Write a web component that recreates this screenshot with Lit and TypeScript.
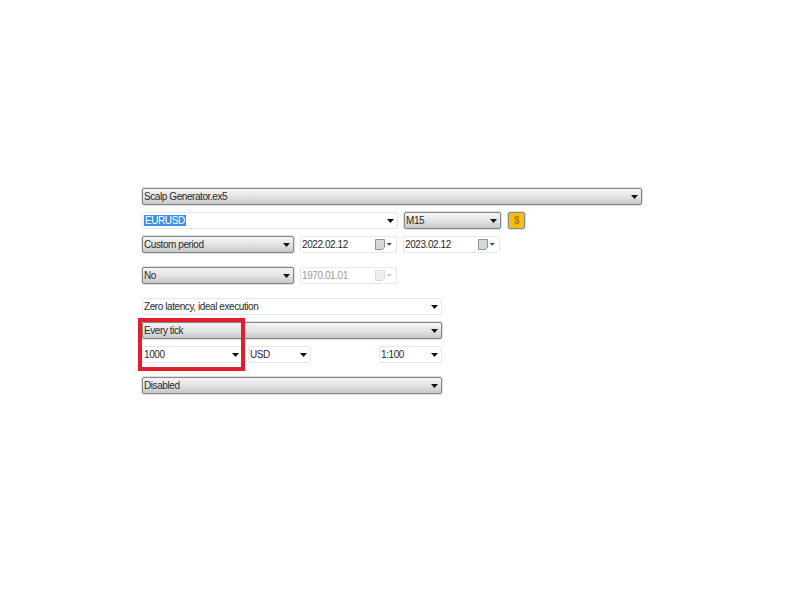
import { LitElement, html, css } from "lit";
import { customElement } from "lit/decorators.js";

const arrow = html`<svg class="arrow" width="7" height="4" viewBox="0 0 7 4"><path d="M0 0h7L3.5 4z" fill="#111"/></svg>`;
const cal = (dis: boolean) => html`<svg width="17" height="11" viewBox="0 0 17 11">
  <path d="M.5.5h9v7.5l-2 2.500H.5z" fill="${dis ? "#eef1f2" : "#d3d8db"}" stroke="${dis ? "#d9dbdd" : "#8f959a"}"/>
  <path d="M11.500 4h5.500l-2.750 2.750z" fill="${dis ? "#c8c8c8" : "#46525e"}"/></svg>`;

@customElement("app-root")
export class AppRoot extends LitElement {
  static styles = css`
    :host { display: block; width: 800px; height: 600px; background: #fff; position: relative; overflow: hidden;
      font-family: "Liberation Sans", Arial, sans-serif; font-size: 10px; letter-spacing: -0.42px; color: #2a2a2a; }
    .form { display: flex; flex-direction: column; padding: 188px 0 0 142px; width: 500px; }
    .row { display: flex; align-items: flex-start; }
    .sel { box-sizing: border-box; height: 17px; display: flex; align-items: center; justify-content: space-between;
      padding: 0 3px 0 1px; border-radius: 2px; flex: none; }
    .gray { border: 1px solid #858585; background: linear-gradient(#f4f4f4, #e6e6e6 45%, #c8c8c8); box-shadow: 0 0 0 1px #e0e0e0; }
    .white { border: 1px solid #e8e8e8; background: #fff; }
    .w500 { width: 500px; } .w300 { width: 300px; } .w256 { width: 256px; } .w152 { width: 152px; }
    .w97 { width: 97px; } .w101 { width: 101px; } .w63 { width: 63px; }
    .ml6 { margin-left: 6px; } .ml7 { margin-left: 7px; } .ml5 { margin-left: 5px; } .ml68 { margin-left: 68px; }
    .mt7 { margin-top: 7px; } .mt14 { margin-top: 14px; }
    .hl { background: #3f8fe3; color: #fff; padding: 0 1px; line-height: 11px; }
    .date { padding: 0 4px 0 1px; }
    .dis { color: #9a9a9a; }
    .coin { box-sizing: border-box; width: 17px; height: 17px; margin-left: 7px; border: 1px solid #8a8a8a; border-radius: 2px;
      background: #f6be12; display: flex; align-items: center; justify-content: center; color: #b27a00; font-weight: bold; font-size: 10px;
      box-shadow: 0 0 0 1px #dedede; }
    .redbox { position: absolute; left: 138px; top: 318px; width: 107px; height: 53px; box-sizing: border-box; border: 4px solid #e31e2c; }
  `;
  render() {
    return html`<div class="form">
      <div class="row"><div class="sel gray w500"><span>Scalp Generator.ex5</span>${arrow}</div></div>
      <div class="row mt7">
        <div class="sel white w256"><span class="hl">EURUSD</span>${arrow}</div>
        <div class="sel gray w97 ml6"><span>M15</span>${arrow}</div>
        <div class="coin">$</div>
      </div>
      <div class="row mt7">
        <div class="sel gray w152"><span>Custom period</span>${arrow}</div>
        <div class="sel white date w97 ml6"><span>2022.02.12</span>${cal(false)}</div>
        <div class="sel white date w97 ml6"><span>2023.02.12</span>${cal(false)}</div>
      </div>
      <div class="row mt14">
        <div class="sel gray w152"><span>No</span>${arrow}</div>
        <div class="sel white date w97 ml6"><span class="dis">1970.01.01</span>${cal(true)}</div>
      </div>
      <div class="row mt14"><div class="sel white w300"><span>Zero latency, ideal execution</span>${arrow}</div></div>
      <div class="row mt7"><div class="sel gray w300"><span>Every tick</span>${arrow}</div></div>
      <div class="row mt7">
        <div class="sel white w101"><span>1000</span>${arrow}</div>
        <div class="sel white w63 ml5"><span>USD</span>${arrow}</div>
        <div class="sel white w63 ml68"><span>1:100</span>${arrow}</div>
      </div>
      <div class="row mt14"><div class="sel gray w300"><span>Disabled</span>${arrow}</div></div>
    </div>
    <div class="redbox"></div>`;
  }
}
